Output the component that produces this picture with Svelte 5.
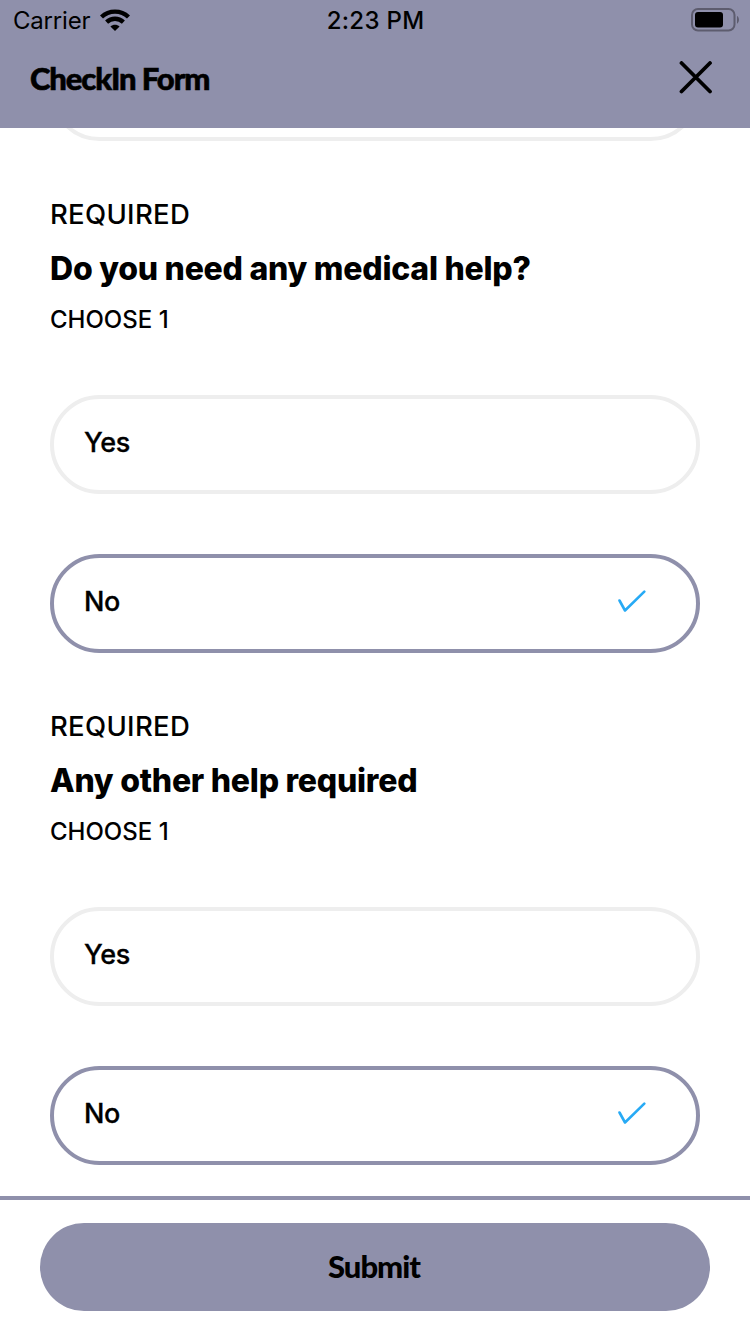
<script lang="ts">
	type Question = {
		id: string;
		title: string;
		options: string[];
		answer: string;
	};

	let questions: Question[] = $state([
		{ id: 'medical', title: 'Do you need any medical help?', options: ['Yes', 'No'], answer: 'No' },
		{ id: 'other', title: 'Any other help required', options: ['Yes', 'No'], answer: 'No' }
	]);
</script>

<div class="screen">
	<header>
		<div class="status-bar">
			<div class="carrier">
				<span>Carrier</span>
				<svg width="30" height="22" viewBox="0 0 30 22">
					<g fill="none" stroke="#000" stroke-width="4.4">
						<path d="M1.5 8C9 .8 21 .8 28.5 8" />
						<path d="M6.6 13.1C11.4 8.6 18.6 8.6 23.4 13.1" />
					</g>
					<path d="M15 22l-4.6-4.6c2.6-2.3 6.6-2.3 9.2 0z" />
				</svg>
			</div>
			<span class="time">2:23 PM</span>
			<div class="battery">
				<svg width="48" height="24" viewBox="0 0 48 24">
					<rect x="1" y="1" width="42.5" height="21.5" rx="6" fill="none" stroke="#5d5c6e" stroke-width="2" />
					<rect x="4" y="4" width="28" height="15.5" rx="3" />
					<path d="M46 8c2.6 1.2 2.6 6.5 0 7.7z" fill="#5d5c6e" />
				</svg>
			</div>
		</div>
		<div class="title-bar">
			<h1>CheckIn Form</h1>
			<button class="close" aria-label="Close">
				<svg width="34" height="34" viewBox="0 0 34 34">
					<path d="M2.5 2L31 30.5M31 2L2.5 30.5" stroke="#000" stroke-width="3.8" stroke-linecap="round" />
				</svg>
			</button>
		</div>
	</header>

	<main>
		<!-- last option of the question scrolled under the header -->
		<div class="option"></div>

		{#each questions as question (question.id)}
			<section>
				<p class="required">REQUIRED</p>
				<h2>{question.title}</h2>
				<p class="choose">CHOOSE 1</p>
				<div class="options">
					{#each question.options as option}
						<button
							class="option"
							class:selected={question.answer === option}
							onclick={() => (question.answer = option)}
						>
							<span>{option}</span>
							{#if question.answer === option}
								<svg width="30" height="24" viewBox="0 0 30 24">
									<path d="M2.5 10.5L8 20.5L27.3 1.6" fill="none" stroke="#27aaf5" stroke-width="2.6" stroke-linecap="round" stroke-linejoin="round" />
								</svg>
							{/if}
						</button>
					{/each}
				</div>
			</section>
		{/each}
	</main>

	<footer>
		<button class="submit">Submit</button>
	</footer>
</div>

<style>
	:global(body) {
		background: #fff;
	}
	.screen {
		width: 750px;
		height: 1334px;
		display: flex;
		flex-direction: column;
		overflow: hidden;
		font-family: Inter, 'Liberation Sans', sans-serif;
		color: #000;
	}
	button {
		border: none;
		margin: 0;
		padding: 0;
		background: transparent;
		font: inherit;
		color: inherit;
		cursor: pointer;
	}
	svg {
		display: block;
	}

	header {
		height: 128px;
		flex: none;
		background: #8f90ab;
	}
	.status-bar {
		display: grid;
		grid-template-columns: 1fr auto 1fr;
		align-items: center;
		height: 40px;
		padding: 0 12px 0 13px;
		font-size: 24px;
	}
	.carrier {
		display: flex;
		align-items: center;
		gap: 10px;
		letter-spacing: -0.2px;
	}
	.time {
		font-weight: 500;
		letter-spacing: 0.3px;
	}
	.battery {
		display: flex;
		justify-content: flex-end;
		margin-right: -1px;
	}
	.title-bar {
		display: flex;
		align-items: center;
		justify-content: space-between;
		height: 76px;
		padding: 0 37px 0 30px;
	}
	h1 {
		margin: 0;
		font-family: Lato, sans-serif;
		font-size: 31px;
		font-weight: 900;
		letter-spacing: -1.1px;
		-webkit-text-stroke: 0.6px #000;
	}

	main {
		flex: 1;
		min-height: 0;
		display: flex;
		flex-direction: column;
		justify-content: flex-end;
		padding: 0 50px 31px;
		overflow: hidden;
	}
	section {
		flex: none;
		padding-top: 56px;
	}
	p,
	h2 {
		margin: 0;
		white-space: nowrap;
	}
	.required {
		font-size: 27.5px;
		font-weight: 500;
		line-height: 34px;
		letter-spacing: 0.3px;
	}
	h2 {
		margin: 17px 0 16px;
		font-size: 32px;
		font-weight: 800;
		line-height: 41px;
		letter-spacing: -0.25px;
	}
	.choose {
		font-size: 24px;
		font-weight: 500;
		line-height: 30px;
	}
	.options {
		display: flex;
		flex-direction: column;
		gap: 60px;
		margin-top: 60px;
	}
	.option {
		flex: none;
		display: flex;
		align-items: center;
		justify-content: space-between;
		box-sizing: border-box;
		width: 100%;
		height: 99px;
		padding: 0 49px 4px 30px;
		border: 4px solid #eee;
		border-radius: 50px;
		font-size: 27px;
		font-weight: 500;
		letter-spacing: -0.3px;
		-webkit-text-stroke: 0.3px #000;
	}
	.option.selected {
		border-color: #8f90ab;
	}

	footer {
		flex: none;
		box-sizing: border-box;
		height: 138px;
		padding: 23px 40px;
		border-top: 4px solid #8f90ab;
	}
	.submit {
		width: 100%;
		height: 88px;
		padding: 0 2px 2px 0;
		border-radius: 44px;
		background: #8f90ab;
		font-family: Lato, sans-serif;
		font-size: 31px;
		font-weight: 900;
		letter-spacing: -1px;
	}
</style>
